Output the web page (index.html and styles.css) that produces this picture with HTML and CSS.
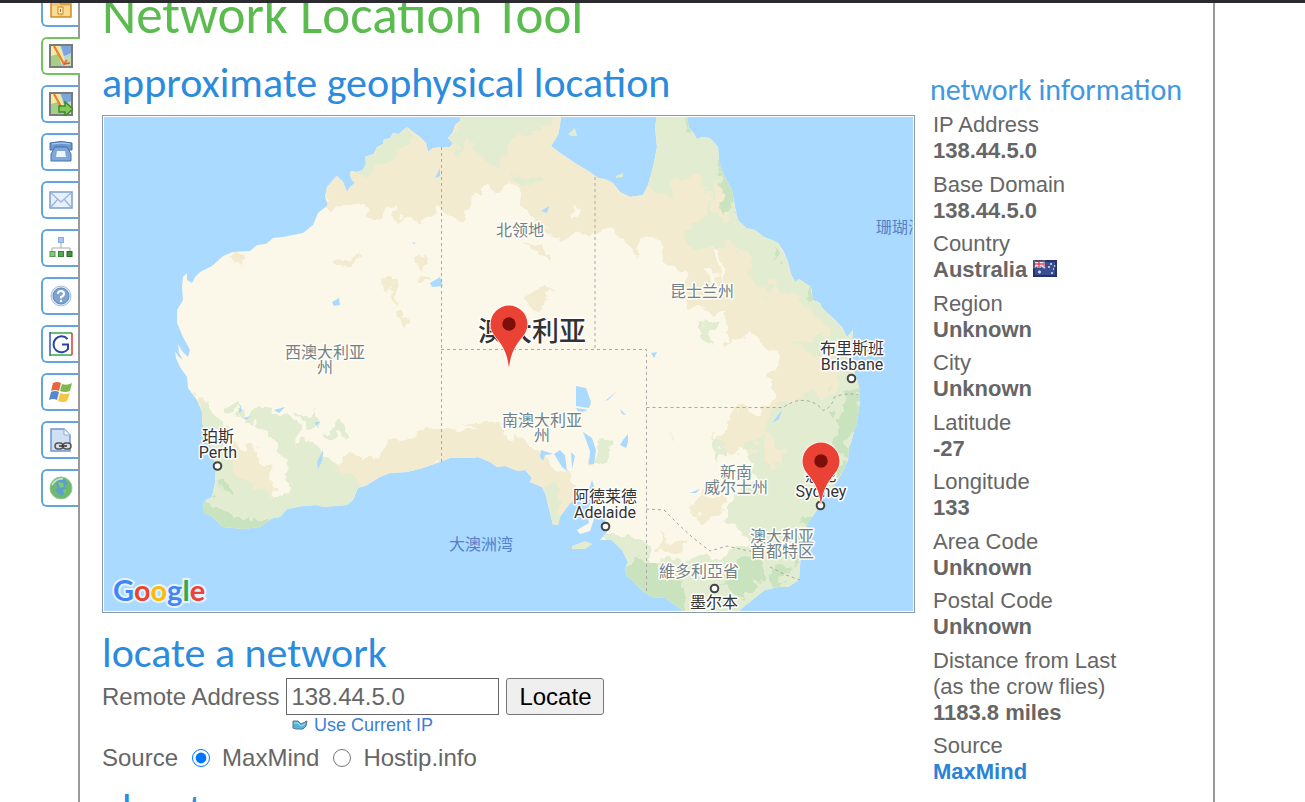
FILE: index.html
```html
<!DOCTYPE html>
<html lang="en">
<head>
<meta charset="utf-8">
<title>Network Location Tool</title>
<link rel="stylesheet" href="styles.css">
</head>
<body>
<div class="shell">
<nav class="tabs" aria-label="Tools">
<a class="tab" href="#" aria-label="Folder"><svg viewBox="0 0 24 24"><path d="M2 5h8l2 3h10v13H2z" fill="#f5c768" stroke="#d08f2c" stroke-width="1.5"/><path d="M3 10h18v10H3z" fill="#fbdb91"/><path d="M12 10v10" stroke="#e1a747"/><rect x="9" y="11" width="5" height="7" fill="#fff0b8" stroke="#c8862a"/><path d="M11.500 13v3" stroke="#b16b16"/></svg></a>
<a class="tab active" href="#" aria-label="Locate"><svg viewBox="0 0 24 24"><g id="mini"><path d="M1 1h22v22H1z" fill="#b4d3ea"/><path d="M2 2h9l5 14-6 6H2z" fill="#f3eca0"/><path d="M12 2h10v7l-7 3z" fill="#7ba7dd"/><path d="M2 12l7-2 4 12H2z" fill="#a4cf84"/><path d="M16 15l6-4v11h-8z" fill="#bfdcab"/><path d="M5 2l10 18 3-4" stroke="#ee7a3c" stroke-width="2.200" fill="none"/><path d="M15 20l6-1" stroke="#dc5540" stroke-width="1.500"/><path d="M1 1h22v22H1z" fill="none" stroke="#7b7b7b" stroke-width="2"/></g></svg></a>
<a class="tab" href="#" aria-label="Trace"><svg viewBox="0 0 24 24"><use href="#mini"/><path d="M10 14h6v-4l8 7-8 7v-4h-6z" fill="#86c85c" stroke="#3d8a2c" stroke-width="1.500"/></svg></a>
<a class="tab" href="#" aria-label="Phone"><svg viewBox="0 0 24 24"><path d="M1 3q11-3 22 0v7h-5l-1-3H7l-1 3H1z" fill="#6d98cf" stroke="#466fa8"/><path d="M6 7h12l4 7v7H2v-7z" fill="#7fa7d8" stroke="#4a74ad"/><path d="M8 11h8l1 6H7z" fill="#eef5fd"/><path d="M3 4q9-2 18 0" stroke="#b7d1ef" fill="none"/></svg></a>
<a class="tab" href="#" aria-label="Mail"><svg viewBox="0 0 24 24"><rect x="1" y="4" width="22" height="16" fill="#e7f0fc" stroke="#7b9ed2" stroke-width="1.500"/><path d="M2 5l10 9 10-9M2 19l7-8M22 19l-7-8" fill="none" stroke="#9db9df" stroke-width="1.500"/></svg></a>
<a class="tab" href="#" aria-label="Network tree"><svg viewBox="0 0 24 24"><path d="M12 7v5M3 15v-3h18v3" fill="none" stroke="#a8a8a8"/><rect x="9.500" y="1.500" width="5" height="5" fill="#a8c8f0" stroke="#8cade0"/><rect x="1" y="15.500" width="5" height="5" fill="#83c780" stroke="#4c9a4c"/><rect x="9.500" y="15.500" width="5" height="5" fill="#56a856" stroke="#378337"/><rect x="18" y="15.500" width="5" height="5" fill="#3f943f" stroke="#286d28"/></svg></a>
<a class="tab" href="#" aria-label="Help"><svg viewBox="0 0 24 24"><circle cx="12" cy="12" r="10" fill="#dce8f6" stroke="#a9c1df"/><circle cx="12" cy="12" r="8" fill="#7fa3d0" stroke="#6289bd"/><path d="M9 10q0-3 3-3t3 2.500-3 3.500v1.500M12 16v2" fill="none" stroke="#fff" stroke-width="2"/></svg></a>
<a class="tab" href="#" aria-label="Google"><svg viewBox="0 0 24 24"><path d="M1 1h22" stroke="#39a845" stroke-width="1.500"/><path d="M1 0v24" stroke="#3656c5" stroke-width="1.500"/><path d="M23 1v22" stroke="#e23636" stroke-width="1.500"/><path d="M1 23h22" stroke="#39a845" stroke-width="1.500"/><path d="M18.500 7A8 8 0 1 0 19 17v-4.500h-6" fill="none" stroke="#2743a8" stroke-width="2"/></svg></a>
<a class="tab" href="#" aria-label="Windows"><svg viewBox="0 0 24 24"><path d="M4 3q4-2 8 0l-2 8q-4-2-8 0z" fill="#e6673e"/><path d="M13 4q5 2 10-1l-2 8q-5 2-10 0z" fill="#82b850"/><path d="M2 12q4-2 8 0l-2 8q-4-2-8 0z" fill="#5688cf"/><path d="M11 13q5 2 10 0l-3 8q-4 2-9 0z" fill="#f2c744"/></svg></a>
<a class="tab" href="#" aria-label="Page link"><svg viewBox="0 0 24 24"><path d="M2 1h13l6 6v16H2z" fill="#cfdff4" stroke="#6e95cb" stroke-width="1.500"/><path d="M15 1v6h6" fill="#f4f8fe" stroke="#8eaed9"/><rect x="6" y="15" width="8" height="6" rx="3" fill="#ddd" stroke="#555" stroke-width="1.500"/><rect x="14" y="15" width="8" height="6" rx="3" fill="#ddd" stroke="#555" stroke-width="1.500"/><path d="M10 18h8" stroke="#333" stroke-width="1.500"/></svg></a>
<a class="tab" href="#" aria-label="World"><svg viewBox="0 0 24 24"><circle cx="12" cy="12" r="11" fill="#6fb96f" stroke="#91c99a"/><path d="M8 4l7-1 4 5-3 1 1 5-4 6-3-2-4-4 3-3-2-3z" fill="#5c9fcf"/><path d="M9 6l5 1 1 4-4 1zM14 14l4-1-3 5z" fill="#7ecb6a"/><path d="M3 9q4-7 11-6" stroke="#c5e9c5" stroke-width="1.500" fill="none"/></svg></a>
</nav>
<div class="page">
<main class="main">
<h1 class="title">Network Location Tool</h1>
<h2 class="heading lead">approximate geophysical location</h2>
<div class="map">
<svg class="map-art" viewBox="104 117 809 494" role="img" aria-label="Map of Australia">
<defs>
<path id="land" d="M462 110L460 121 455 125 453 132 448 138 453 143 450 147 443 147 433 148 428 152 426 143 420 137 413 132 407 127 402 131 399 134 393 133 390 138 383 140 383 144 377 147 374 154 365 157 366 163 363 170 357 172 351 171 350 175 352 180 355 183 350 187 347 192 343 182 337 176 333 180 327 187 325 197 328 205 318 213 313 225 303 233 283 237 273 238 266 244 257 245 250 251 233 252 223 256 212 266 200 272 195 277 192 283 187 280 187 273 183 277 182 287 183 300 177 310 177 323 183 337 190 350 188 357 182 351 178 344 179 353 183 360 178 356 175 351 176 358 180 367 187 377 188 388 197 400 202 412 202 422 207 437 213 453 215 467 215 483 212 497 203 502 204 513 213 517 223 527 243 529 260 527 273 518 280 517 287 509 303 506 317 505 323 507 347 505 353 500 358 488 367 485 380 477 390 473 407 472 423 468 440 462 450 458 473 458 478 457 490 462 497 467 505 466 518 471 525 470 532 478 530 482 542 487 545 493 547 500 550 513 553 525 558 525 560 517 567 507 574 499 583 493 590 487 592 480 594 486 593 495 591 503 586 512 589 523 577 530 580 534 590 531 594 519 597 512 606 512 605 523 607 532 600 540 612 540 622 550 628 562 625 569 627 576 635 583 644 592 652 597 665 598 678 607 688 615H736L742 608 750 602 757 596 765 590 778 587 788 587 799 580 800 567 801 550 803 540 808 523 817 510 822 500 833 487 842 473 848 460 849 447 851 443 854 431 857 423 860 400 860 391 857 380 853 367 853 355 852 343 853 330 847 337 842 327 833 318 822 308 820 303 813 300 811 287 802 281 799 279 795 282 791 274 788 262 784 252 778 243 772 240 764 237 755 230 746 228 738 220 735 207 732 190 723 173 719 161 718 147 710 138 702 137 697 139 693 132 689 128 686 110H658L655 127 657 147 653 167 648 185 643 195 630 197 620 192 613 183 605 179 598 178 590 172 575 163 560 153 551 146 558 135 560 125 562 110Z"/>
<clipPath id="coast"><use href="#land"/></clipPath>
<filter id="rough" x="-5%" y="-5%" width="110%" height="110%" color-interpolation-filters="sRGB"><feTurbulence type="fractalNoise" baseFrequency="0.06" numOctaves="3" seed="4"/><feDisplacementMap in="SourceGraphic" scale="26" xChannelSelector="R" yChannelSelector="G"/></filter>
</defs>
<path class="sea" d="M100 110h820v510H100z"/>
<use class="land" href="#land"/>
<path class="green" d="M572 546l13-5 8 3-8 5-13 0zM568 134l7-6 2 8-6 0zM616 176l7-3 0 4-7 1z"/>
<g clip-path="url(#coast)">
<g filter="url(#rough)">
<path class="tan" d="M315 170L405 110 440 100H700L750 220 822 290 875 370 870 470 800 500 760 470 735 440 738 420 765 395 780 362 748 330 725 345 722 315 695 310 682 275 665 260 650 235 636 255 625 240 612 233 590 232 560 242 550 235 530 215 510 190 485 185 470 200 462 225 440 208 425 222 400 220 395 208 380 218 365 215 358 205 328 210z"/>
<path class="green" d="M352 178L385 130 405 115 412 140 385 162zM455 105H565L555 128 520 135 505 150 498 172 486 160 472 142 452 155zM510 172l20-2 10 12-20 5zM650 105H700L730 170 750 220 790 260 825 305 865 345 870 450 800 600 680 640 615 580 615 545 640 540 652 562 700 560 748 540 728 520 735 495 760 480 745 455 765 430 775 405 805 395 835 392 838 370 800 345 830 330 810 312 790 290 770 305 755 280 748 250 725 245 700 250 685 235 700 222 712 200 706 180 680 175 668 195 650 190 640 180z"/>
<path class="tan" d="M715 180l12 10 5 30-10 5-10-20zM738 250l12 8 2 18-14-6zM770 280l16 8-3 28-16-8zM790 312l14 12-4 18-14-8zM700 495l22 0 3 15-20 12-14-14zM765 430l18 20-3 18-20-8zM780 355l24 12-8 18-26-8zM660 535l30 5-12 14-24-5zM725 565l24 2-12 12-14-3zM650 420l4 3M670 428l8 10-3 1zM740 400l40 8-30 30-15 20-20-18z"/>
<path class="tan" d="M180 375L203 400 224 435 262 455 290 520 260 530 220 490 200 430zM280 515L320 470 350 455 375 455 405 440 430 425 445 422 470 428 500 425 525 440 545 460 570 480 590 510 560 540 520 485 495 470 440 465 360 500zM465 420l30 0 10 10-25 2zM225 256l20-6 5 16-14-4zM333 256l26 4-8 8-18-6zM380 282l18-2-3 8-14 2zM391 281l6-3-2 28-5-8zM397 314l10-2 0 18-7-4zM411 256l14 0-2 10-10-4zM415 271l10 2-5 8zM525 240l18 5 8 15-18-10zM525 298l26-8-5 12-20 2z"/>
<path class="green" d="M196 400L212 405 228 455 245 480 285 495 292 470 275 452 268 430 245 418 262 405 285 415 300 425 295 445 315 438 325 455 340 470 362 480 355 515 290 515 260 535H190V490L215 480 206 440zM228 408l12-2 0 8-10 2zM295 412l18 0 5 12-14-2zM332 420l12 8 0 12-14-4zM540 480l15 10 8 36-8 10-10-25zM600 532l30 8 20 5 5 55-35-20zM590 460l14-24 8 5-14 25zM700 320l12 8 2 15-12-8zM715 438l10 6-8 15-8-10z"/>
<path class="forest" d="M195 500l20 3 20 15 20 0 20 10-30 15h-50zM219 478l8 2 0 16-7-2zM717 150l8 20 12 40-12 5-5-35zM685 105l6 18 4 9-8-8zM772 250l8 6-2 8-7-4zM806 282l8 10-2 10zM840 395l24-8-6 30-10 38-14-8 8-20-12-10 12-10zM838 455l12 5-20 34zM806 515l10 3-16 45-10 0 2-20zM626 565l25-5 30 25 8 15-10 20-55-20zM722 585l14-20 16-5 15 18-20 16zM768 575l20-14-5 22z"/>
<path class="land" d="M707 245l10 6 8 18 0 14-6-3-2-20zM705 268l8 6 5 10-12-3zM505 185l15 10 8 20 15 12-10 4-18-12zM570 210l8 2-3 10zM705 370l10-12 15 20 42 2 0 20-18 14-20-8-20 5zM650 532l28-8 10 6-20 10z"/>
</g>
<g class="sea"><path d="M576 386l10 2 5 14-2 6-13-2zM583 432l9 6 4 12-2 14-5 0 1-13zM560 450l5 5 2 16-5-4-8-13zM541 450l12 4-8 1-2 6-3-4zM623 440l5-6 0 8-2 6-6-3zM576 408l12 2-9 3zM620 409l6 6-4-1zM605 401l12-10-9 9zM430 283l10-6 3 9-11 1zM332 302l7-4 1 7-6 1zM338 275l4 4zM274 410l11-3-6 6zM317 462l6-12-1 11-4 8zM315 422l5 0-4 4zM240 405l2 6-3 2zM243 418l8-2-5 4zM320 415l6 2zM435 178l5-10 0 8zM541 211l8-5-2 7zM651 353l6-1-3 6zM553 216l4 2zM571 452l4 4-3 13zM772 423l10-13-3 9zM690 493l10-4-4 4zM412 242l4 1-2 1zM206 332l5 1zM500 273l5 3zM260 256l3 4zM352 279l2 6z"/></g>
</g>
<path class="border" d="M441.500 147V462M595 177V349.500M441 349.500H646.500V594M646.500 407.500H783q12-8 20-7 12 0 20 10 9-3 11-13 10-5 24-3M646 509l18 1 14 14 14 13 18 14 17-5 22 5 18 0M770 567l16 8 14 5"/>
<g class="region">
<text x="520" y="236">北领地</text><text x="702" y="297">昆士兰州</text><text x="325" y="358">西澳大利亚</text><text x="325" y="373">州</text><text x="542" y="426">南澳大利亚</text><text x="542" y="441">州</text><text x="736" y="478">新南</text><text x="736" y="493">威尔士州</text><text x="782" y="542">澳大利亚</text><text x="782" y="557">首都特区</text><text x="699" y="577">維多利亞省</text>
</g>
<g class="water"><text x="481" y="550">大澳洲湾</text><text x="900" y="233">珊瑚海</text></g>
<text class="nation" x="532" y="341">澳大利亚</text>
<g class="city">
<text x="218" y="442">珀斯</text><text x="218" y="458">Perth</text><text x="852" y="354">布里斯班</text><text x="852" y="370">Brisbane</text><text x="605" y="502">阿德莱德</text><text x="605" y="518">Adelaide</text><text x="821" y="481">悉尼</text><text x="821" y="497">Sydney</text><text x="714" y="608">墨尔本</text>
</g>
<g class="dot"><circle cx="217.500" cy="466" r="3.800"/><circle cx="851.500" cy="378.500" r="3.800"/><circle cx="605.500" cy="526.500" r="3.800"/><circle cx="820.500" cy="505.500" r="3.800"/><circle cx="714.500" cy="588.500" r="3.800"/></g>
<g id="pin"><path d="M509 368C507 352 503 347 498 340 493 334 490.500 330 490.500 324A18.500 18.500 0 0 1 527.500 324C527.500 330 525 334 520 340 515 347 511 352 509 368z" fill="#ea4335" stroke="#fff" stroke-width="1.500" paint-order="stroke"/><circle cx="509" cy="324" r="6.700" fill="#7d0f0b"/></g>
<use href="#pin" x="312" y="137"/>
<text class="logo" x="113" y="601"><tspan fill="#4285f4">G</tspan><tspan fill="#ea4335">o</tspan><tspan fill="#fbbc05">o</tspan><tspan fill="#4285f4">g</tspan><tspan fill="#34a853">l</tspan><tspan fill="#ea4335">e</tspan></text>
</svg>
</div>
<h2 class="heading">locate a network</h2>
<form class="form">
<div class="row"><label for="addr">Remote Address</label><input class="field" id="addr" type="text" value="138.44.5.0"><button class="go" type="button">Locate</button></div>
<a class="current" href="#"><svg class="hand" viewBox="0 0 16 10"><path d="M1 1h5l3 3 6-3-1 5-3 3H4L1 8z" fill="#55b4dc" stroke="#56788d"/><path d="M2 3h4l3 3 4-2" stroke="#b9e4f3" fill="none"/></svg>Use Current IP</a>
<div class="sources"><span>Source</span><label class="choice"><input class="radio" type="radio" name="source" checked>MaxMind</label><label class="choice"><input class="radio" type="radio" name="source">Hostip.info</label></div>
</form>
<h2 class="heading">about</h2>
</main>
<aside class="side">
<h3 class="subheading">network information</h3>
<dl class="facts">
<div><dt>IP Address</dt><dd>138.44.5.0</dd></div>
<div><dt>Base Domain</dt><dd>138.44.5.0</dd></div>
<div><dt>Country</dt><dd>Australia <svg class="flag" viewBox="0 0 24 17" role="img" aria-label="Flag of Australia"><path d="M0 0h24v17H0z" fill="#3a4f8f"/><path d="M0 0l12 8M12 0L0 8" stroke="#e8c7d0" stroke-width="2"/><path d="M6 0v8M0 4h12" stroke="#fff" stroke-width="3"/><path d="M6 0v8M0 4h12" stroke="#df4557" stroke-width="1.500"/><path d="M5 12h3M6.500 10.500v3M18 3v2M15 7h2M21 6h2M18 13h2M20 9h1" stroke="#dfe6f8" stroke-width="1.500"/><path d="M1 1h22v15H1z" fill="none" stroke="#15214f" stroke-width="2" stroke-opacity=".6"/></svg></dd></div>
<div><dt>Region</dt><dd>Unknown</dd></div>
<div><dt>City</dt><dd>Unknown</dd></div>
<div><dt>Latitude</dt><dd>-27</dd></div>
<div><dt>Longitude</dt><dd>133</dd></div>
<div><dt>Area Code</dt><dd>Unknown</dd></div>
<div><dt>Postal Code</dt><dd>Unknown</dd></div>
<div><dt>Distance from Last<br>(as the crow flies)</dt><dd>1183.8 miles</dd></div>
<div><dt>Source</dt><dd><a class="source-link" href="#">MaxMind</a></dd></div>
</dl>
</aside>
</div>
</div>
</body>
</html>
```

FILE: styles.css
```css
* { box-sizing: border-box; }
body {
  margin: 0;
  height: 100vh;
  overflow: hidden;
  border-top: 3px solid #2b2a2e;
  background: #fff;
  color: #666;
  font: 24px/30px "Liberation Sans", Arial, sans-serif;
}
h1, h2, h3, dl, dd { margin: 0; }
a { color: #3b7dd8; text-decoration: none; }
.shell {
  display: flex;
  height: 100%;
  overflow: hidden;
  padding: 0 90px 0 41px;
}
.tabs {
  display: flex;
  flex: none;
  flex-direction: column;
  gap: 10px;
  width: 37px;
  margin-top: -14px;
}
.tab {
  display: flex;
  flex: none;
  align-items: center;
  justify-content: center;
  height: 38px;
  border: 2px solid #62a5df;
  border-right: 0;
  border-radius: 6px 0 0 6px;
  background: #fff;
}
.tab svg { width: 24px; height: 24px; }
.tab.active {
  z-index: 1;
  width: 39px;
  padding-right: 2px;
  border-color: #71c55f;
}
.page {
  display: flex;
  flex: 1;
  gap: 15px;
  min-width: 0;
  min-height: 100%;
  padding-left: 22px;
  border: solid #999;
  border-width: 0 2px;
}
.main { flex: 1; min-width: 0; }
.title, .heading, .subheading {
  font-family: Carlito, Lato, sans-serif;
  font-weight: 400;
  white-space: nowrap;
}
.title { color: #5bbb4f; font-size: 53px; line-height: 24px; height: 50px; }
.heading { margin-top: 11px; color: #2b8bdd; font-size: 42px; line-height: 50px; }
.heading.lead { margin: 5px 0 7px; }
.map { margin-bottom: 15px; padding: 1px; border: 1px solid #8c98a8; }
.map-art { display: block; width: 100%; }
.sea { fill: #aadaff; }
.land { fill: #fbf7e9; }
.tan { fill: #f2ebcf; }
.green { fill: #e1ecd0; }
.forest { fill: #c8e3bd; }
.border { fill: none; stroke: #a9a8a3; stroke-width: 1px; stroke-dasharray: 3 3; }
.region, .water, .city, .nation {
  font-family: Roboto, "Noto Sans CJK SC", sans-serif;
  font-size: 16px;
  text-anchor: middle;
  paint-order: stroke;
  stroke-width: 3px;
  stroke-linejoin: round;
}
.region { fill: #6f8189; stroke: #fffdf5; }
.water { fill: #5580c8; stroke: none; }
.city { fill: #333; stroke: #fff; }
.nation { fill: #333; font-size: 27px; font-weight: 500; stroke: #fff; }
.dot { fill: #fff; stroke: #444; stroke-width: 2px; }
.logo { font: 700 29px Lato, sans-serif; paint-order: stroke; stroke: #e5f3ff; stroke-width: 4px; }
.form { display: flex; flex-direction: column; align-items: flex-start; }
.row { display: flex; align-items: center; gap: 7px; }
.field {
  width: 213px;
  height: 37px;
  padding: 0 4px;
  border: 1px solid #666;
  background: #fff;
  color: #666;
  font: inherit;
}
.go {
  height: 37px;
  padding: 0 12px;
  border: 1px solid #767676;
  border-radius: 3px;
  background: #efefef;
  color: #000;
  font: inherit;
}
.current {
  display: flex;
  align-items: center;
  gap: 6px;
  margin-left: 190px;
  font-size: 18px;
  line-height: 20px;
}
.hand { width: 16px; height: 10px; }
.sources { display: flex; gap: 14px; padding-top: 8px; }
.choice { display: flex; align-items: center; gap: 12px; }
.radio { width: 18px; height: 18px; margin: 0; }
.side { flex: none; width: 283px; padding-top: 70px; font-size: 22px; line-height: 26px; }
.subheading { margin-bottom: 5px; color: #4298e0; font-size: 30px; line-height: 34px; }
.facts {
  display: flex;
  flex-direction: column;
  justify-content: space-between;
  min-height: 673px;
  padding-left: 3px;
}
dd { font-weight: 700; }
.flag { width: 24px; height: 17px; }
.source-link { color: #2b82d6; }
```
